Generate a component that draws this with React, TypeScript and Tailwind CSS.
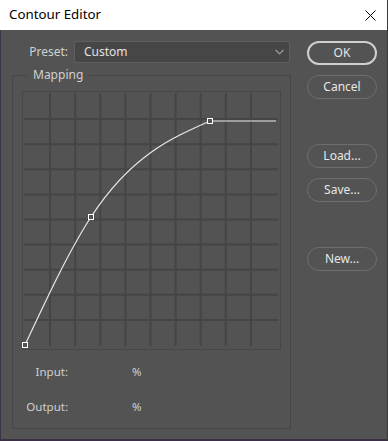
import React from "react";

const FONT = { fontFamily: '"Noto Sans", "Open Sans", sans-serif' };

function Graph() {
  const step = 25.1;
  const idx = [1, 2, 3, 4, 5, 6, 7, 8, 9];
  return (
    <svg width="259" height="259" viewBox="0 0 259 259" className="block">
      {idx.map((i) => (
        <line
          key={"v" + i}
          x1={3 + step * i}
          y1={2}
          x2={3 + step * i}
          y2={255}
          stroke="#454545"
          strokeWidth="2"
        />
      ))}
      {idx.map((i) => (
        <line
          key={"h" + i}
          x1={2}
          y1={3 + step * i}
          x2={256}
          y2={3 + step * i}
          stroke="#454545"
          strokeWidth="2"
        />
      ))}
      <path
        d="M3 254 C25 206.9 47 159.8 69 126 C108.67 65.1 148.33 47.55 188 30 L254 30"
        fill="none"
        stroke="#e8e8e8"
        strokeWidth="1.2"
      />
      {[
        [3, 254],
        [69, 126],
        [188, 30],
      ].map(([x, y], k) => (
        <rect
          key={k}
          x={x - 2.5}
          y={y - 2.5}
          width="5"
          height="5"
          fill="#535353"
          stroke="#ffffff"
          strokeWidth="1"
        />
      ))}
    </svg>
  );
}

function Btn({ label, primary, className }: { label: string; primary?: boolean; className?: string }) {
  return (
    <div
      className={
        "h-[24px] w-[70px] rounded-full flex items-center justify-center text-[12px] text-[#e6e6e6] " +
        (primary ? "border-[2px] border-[#cfcfcf] " : "border border-[#6e6e6e] ") +
        (className ?? "")
      }
    >
      {label}
    </div>
  );
}

export default function App() {
  return (
    <div className="w-[388px] h-[441px] flex flex-col bg-[#535353]" style={FONT}>
      <div className="h-[30px] bg-white flex items-center justify-between pl-[9px] pr-[10px] border-r border-[#3a3a3a] shrink-0">
        <span className="text-[13.3px] text-black" style={{ fontFamily: '"Noto Sans", sans-serif' }}>
          Contour Editor
        </span>
        <svg width="11" height="11" viewBox="0 0 11 11" className="mr-[1px]">
          <path d="M0.5 0.5 L10.5 10.5 M10.5 0.5 L0.5 10.5" stroke="#000" strokeWidth="1" />
        </svg>
      </div>
      <div className="flex-1 flex border-l border-r border-b-2 border-l-[#3c3444] border-r-[#3a3a3a] border-b-[#3a2f44]">
        <div className="ml-[11px] w-[279px] pt-[11px] flex flex-col">
          <div className="h-[22px] flex items-center">
            <span className="w-[56px] text-right text-[12px] text-[#d0d0d0]">Preset:</span>
            <div className="ml-[6px] w-[216px] h-[22px] rounded-[2px] bg-[#464646] border border-[#5e5e5e] flex items-center justify-between pl-[9px] pr-[5px]">
              <span className="text-[12px] text-[#e2e2e2]">Custom</span>
              <svg width="9" height="6" viewBox="0 0 9 6">
                <path d="M0.5 0.8 L4.5 4.8 L8.5 0.8" fill="none" stroke="#a8a8a8" strokeWidth="1.1" />
              </svg>
            </div>
          </div>
          <div className="relative mt-[12px] h-[354px] border border-[#464646] flex flex-col">
            <span className="absolute left-[14px] top-[-10px] px-[6px] bg-[#535353] text-[12px] leading-[18px] text-[#d0d0d0]">
              Mapping
            </span>
            <div className="ml-[9px] mt-[15px] w-[259px] h-[259px] border border-[#474747]">
              <div className="-m-px">
                <Graph />
              </div>
            </div>
            <div className="mt-[13px] h-[18px] flex items-center text-[11.5px] text-[#d0d0d0]">
              <span className="w-[55px] text-right">Input:</span>
              <span className="ml-[64px]">%</span>
            </div>
            <div className="mt-[17px] h-[18px] flex items-center text-[11.5px] text-[#d0d0d0]">
              <span className="w-[55px] text-right">Output:</span>
              <span className="ml-[64px]">%</span>
            </div>
          </div>
        </div>
        <div className="ml-[16px] pt-[11px] flex flex-col">
          <Btn label="OK" primary />
          <Btn label="Cancel" className="mt-[10px]" />
          <Btn label="Load..." className="mt-[45px]" />
          <Btn label="Save..." className="mt-[10px]" />
          <Btn label="New..." className="mt-[45px]" />
        </div>
      </div>
    </div>
  );
}
